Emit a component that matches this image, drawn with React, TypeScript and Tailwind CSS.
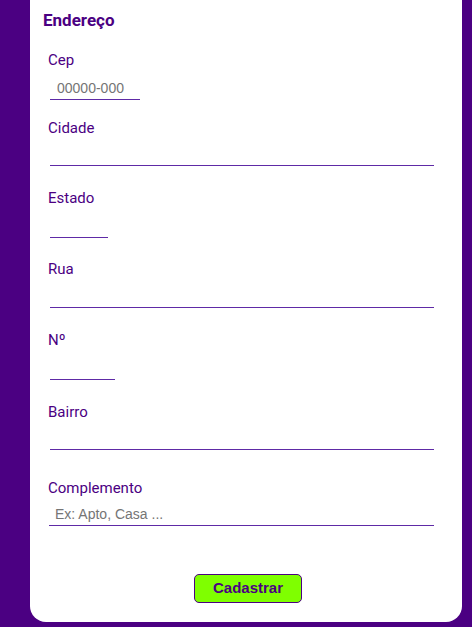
const fields = [
  { label: "Cep", placeholder: "00000-000", wrap: "mt-[21px]", input: "mt-[9px] w-[90px]" },
  { label: "Cidade", placeholder: "", wrap: "mt-[19px]", input: "mt-[7px] w-[384px]" },
  { label: "Estado", placeholder: "", wrap: "mt-[23px]", input: "mt-[9px] w-[58px]" },
  { label: "Rua", placeholder: "", wrap: "mt-[22px]", input: "mt-[8px] w-[384px]" },
  { label: "Nº", placeholder: "", wrap: "mt-[23px]", input: "mt-[9px] w-[65px]" },
  { label: "Bairro", placeholder: "", wrap: "mt-[23px]", input: "mt-[7px] w-[384px]" },
];

const App = () => {
  return (
    <div className="min-h-screen bg-[#4b0082]">
      <div className="ml-[30px] w-[432px] bg-white rounded-b-[16px] pt-[10px] pb-[19px]">
        <h2 className="ml-[13px] text-[17px] leading-[20px] font-bold text-[#4b0082] font-['Roboto',sans-serif]">
          Endereço
        </h2>

        <form className="flex flex-col" onSubmit={(e) => e.preventDefault()}>
          {fields.map((f) => (
            <div key={f.label} className={`flex flex-col ${f.wrap}`}>
              <label className="ml-[18px] text-[15px] leading-[18px] text-[#4b0082] font-['Roboto',sans-serif]">
                {f.label}
              </label>
              <div className={`ml-[20px] flex flex-col ${f.input}`}>
                <input
                  type="text"
                  placeholder={f.placeholder}
                  className="w-full h-[21px] px-[7px] outline-none text-[14px] leading-[21px] text-[#4b0082] font-['Liberation_Sans',Arial,sans-serif] placeholder:text-[#757575]"
                />
                <div className="h-px bg-[#5e2aa6]" />
              </div>
            </div>
          ))}

          {/* Complemento */}
          <div className="flex flex-col mt-[29px]">
            <label className="ml-[18px] text-[15px] leading-[18px] text-[#4b0082] font-['Roboto',sans-serif]">
              Complemento
            </label>
            <div className="ml-[19px] mt-[7px] w-[385px] flex flex-col">
              <input
                type="text"
                placeholder="Ex: Apto, Casa ..."
                className="w-full h-[21px] px-[6px] outline-none text-[14px] leading-[21px] text-[#4b0082] font-['Liberation_Sans',Arial,sans-serif] placeholder:text-[#757575]"
              />
              <div className="h-px bg-[#5e2aa6]" />
            </div>
          </div>

          <div className="flex justify-center mt-[48px]">
            <button
              type="submit"
              className="ml-[4px] w-[108px] h-[29px] bg-[#7fff00] border border-[#4b0082] rounded-[5px] text-[15px] font-bold text-[#4b0082] font-['Liberation_Sans',Arial,sans-serif]"
            >
              Cadastrar
            </button>
          </div>
        </form>
      </div>
    </div>
  );
};

export default App;
